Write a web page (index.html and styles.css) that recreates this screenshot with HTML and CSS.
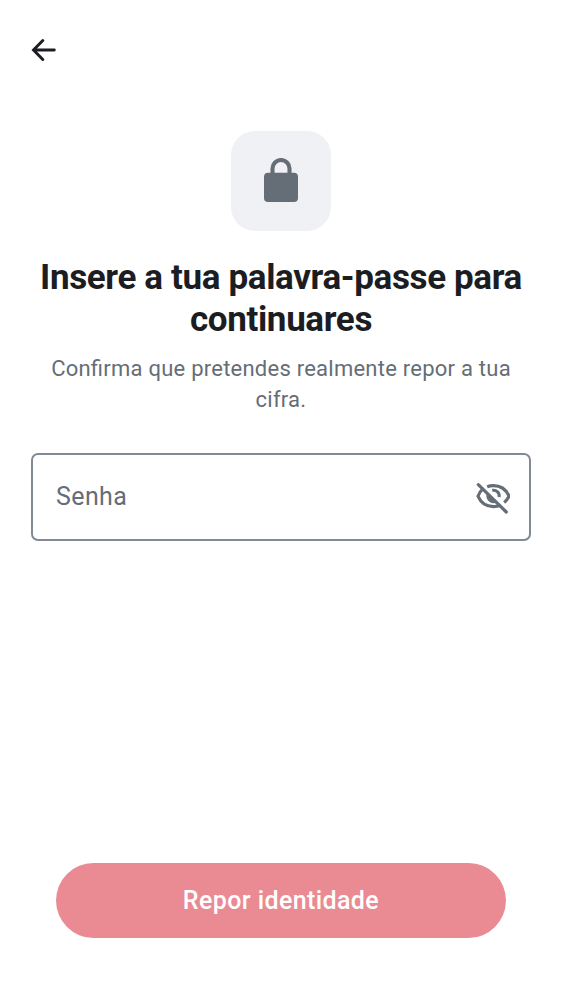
FILE: index.html
```html
<!DOCTYPE html>
<html lang="pt">
<head>
<meta charset="utf-8">
<title>Repor identidade</title>
<link rel="stylesheet" href="styles.css">
</head>
<body>
<main class="screen">
  <button class="back" aria-label="Voltar">
    <svg viewBox="0 0 25 22"><path d="M23.3 11H2.8M11.8 1.6L2.5 11l9.3 9.4" fill="none" stroke="currentColor" stroke-width="2.9" stroke-linecap="round"/></svg>
  </button>
  <div class="badge">
    <svg class="lock" viewBox="0 0 34 44"><rect y="14.7" width="34" height="29.3" rx="4" fill="currentColor"/><path d="M8.5 16v-5.5a8.5 8.5 0 0 1 17 0V16" fill="none" stroke="currentColor" stroke-width="4.1"/></svg>
  </div>
  <h1 class="title">Insere a tua palavra-passe para<br>continuares</h1>
  <p class="subtitle">Confirma que pretendes realmente repor a tua<br>cifra.</p>
  <div class="field">
    <span class="label">Senha</span>
    <svg class="eye" viewBox="474 479 36 36"><g fill="none" stroke="currentColor" stroke-width="3.2"><path d="M478.3 484.6l28 27.4" stroke-linecap="round"/><path d="M487.2 486.7c2-.7 4-1 6.1-1 7.3 0 13 4.2 15.7 10.5-1.1 2.5-2.7 4.6-4.8 6.3"/><path d="M483.1 488.6c-2.1 1.8-4 4.5-5.1 7.6 2.7 6.3 8.2 10.4 15.3 10.4 2.8 0 5.3-.5 7.5-1.5"/><path d="M492.2 490.2c4.5-.5 7.5 2.5 7 7" stroke-width="3"/></g><path d="M487 492.7l9.8 9.6c-5.7 3.4-12.6-3.3-9.8-9.6z" fill="currentColor"/></svg>
  </div>
  <button class="action">Repor identidade</button>
</main>
</body>
</html>
```
FILE: styles.css
```css
* { box-sizing: border-box; }
body { margin: 0; background: #fff; font-family: Roboto, sans-serif; color: #1b1d22; }
.screen { height: 1000px; padding: 39px 31px 62.5px; display: flex; flex-direction: column; align-items: center; }
.back { align-self: flex-start; width: 25px; height: 22px; padding: 0; border: 0; background: none; color: #1b1d22; }
.back svg { display: block; width: 25px; height: 22px; }
.badge { width: 100px; height: 100px; margin-top: 70px; padding-bottom: 2px; border-radius: 24px; background: #f0f1f5; display: flex; align-items: center; justify-content: center; color: #656d77; }
.lock { width: 34px; height: 44px; }
.title { margin: 26px 0 0; font-size: 35px; line-height: 42px; font-weight: 700; letter-spacing: -.36px; text-align: center; white-space: nowrap; color: #1b1d22; }
.subtitle { margin: 12px 0 0; font-size: 22px; line-height: 31px; letter-spacing: .24px; font-feature-settings: "liga" 1; color: #656d77; text-align: center; white-space: nowrap; }
.field { width: 500px; height: 88px; margin-top: 38px; padding: 0 19px 0 23px; border: 2px solid #818a95; border-radius: 7px; display: flex; align-items: center; justify-content: space-between; color: #656d77; }
.label { padding-bottom: 1px; font-size: 25px; letter-spacing: .4px; }
.eye { width: 36px; height: 36px; }
.action { width: 450px; height: 75px; margin-top: auto; padding: 0; border: 0; border-radius: 38px; background: #ea8b93; color: #fff; font: 500 25px Roboto, sans-serif; letter-spacing: .4px; }
```
